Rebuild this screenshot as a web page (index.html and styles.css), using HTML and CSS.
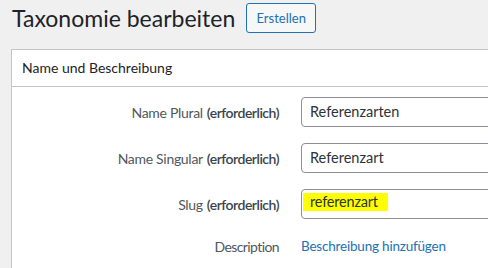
FILE: index.html
```html
<!DOCTYPE html>
<html lang="de">
<head>
<meta charset="utf-8">
<link rel="stylesheet" href="styles.css">
</head>
<body>
<div class="wrap">
  <div class="head">
    <h1 class="title">Taxonomie bearbeiten</h1>
    <span class="button">Erstellen</span>
  </div>
  <div class="card">
    <div class="card-header">Name und Beschreibung</div>
    <div class="rows">
      <div class="label">Name Plural <b>(erforderlich)</b></div>
      <div class="field"><div class="input">Referenzarten</div></div>
      <div class="label">Name Singular <b>(erforderlich)</b></div>
      <div class="field"><div class="input">Referenzart</div></div>
      <div class="label">Slug <b>(erforderlich)</b></div>
      <div class="field"><div class="input slug"><span class="mark">referenzart</span></div></div>
      <div class="label desc-label">Description</div>
      <div class="field"><span class="link">Beschreibung hinzufügen</span></div>
    </div>
  </div>
</div>
</body>
</html>
```
FILE: styles.css
```css
html, body {
  margin: 0;
  padding: 0;
  background: #f0f0f1;
  overflow: hidden;
  font-family: "Lato", "Noto Sans", sans-serif;
  color: #1d2327;
}
.wrap {
  padding-left: 11px;
  width: 700px;
}
.head {
  display: flex;
  align-items: center;
  gap: 11px;
  height: 35px;
  padding-left: 1px;
}
.title {
  margin: 0;
  font-size: 23px;
  font-weight: 400;
  line-height: 30px;
  color: #1d2327;
}
.button {
  box-sizing: border-box;
  height: 30px;
  line-height: 28px;
  width: 70px;
  text-align: center;
  font-size: 13px;
  color: #2271b1;
  background: #f6f7f7;
  border: 1px solid #2271b1;
  border-radius: 3px;
}
.card {
  margin-top: 14px;
  border: 1px solid #c3c4c7;
  background: #fff;
  height: 300px;
}
.card-header {
  height: 36px;
  line-height: 36px;
  padding-left: 10px;
  font-size: 14px;
  border-bottom: 1px solid #c3c4c7;
  color: #1d2327;
}
.rows {
  display: grid;
  grid-template-columns: 268px 1fr;
  column-gap: 21px;
  row-gap: 16px;
  padding-top: 10px;
}
.label {
  font-size: 14px;
  letter-spacing: -0.3px;
  color: #50575e;
  display: flex;
  align-items: center;
  justify-content: flex-end;
  height: 30px;
  padding-right: 1px;
}
.label b {
  font-weight: 600;
  color: #3c434a;
  margin-left: 4px;
  letter-spacing: -0.5px;
}
.desc-label {
  height: 22px;
  letter-spacing: -0.6px;
}
.field {
  display: flex;
  align-items: center;
}
.input {
  box-sizing: border-box;
  width: 400px;
  height: 30px;
  border: 1px solid #8c8f94;
  border-radius: 4px;
  padding: 0 8px;
  font-size: 14.5px;
  line-height: 28px;
  color: #2c3338;
}
.input.slug {
  padding: 3px 0 0 1px;
  display: flex;
  align-items: flex-start;
}
.mark {
  background: #ffff00;
  line-height: 18px;
  padding: 0 10px 0 7px;
  letter-spacing: -0.2px;
}
.link {
  font-size: 13.5px;
  letter-spacing: -0.2px;
  color: #2271b1;
  line-height: 22px;
}
```
